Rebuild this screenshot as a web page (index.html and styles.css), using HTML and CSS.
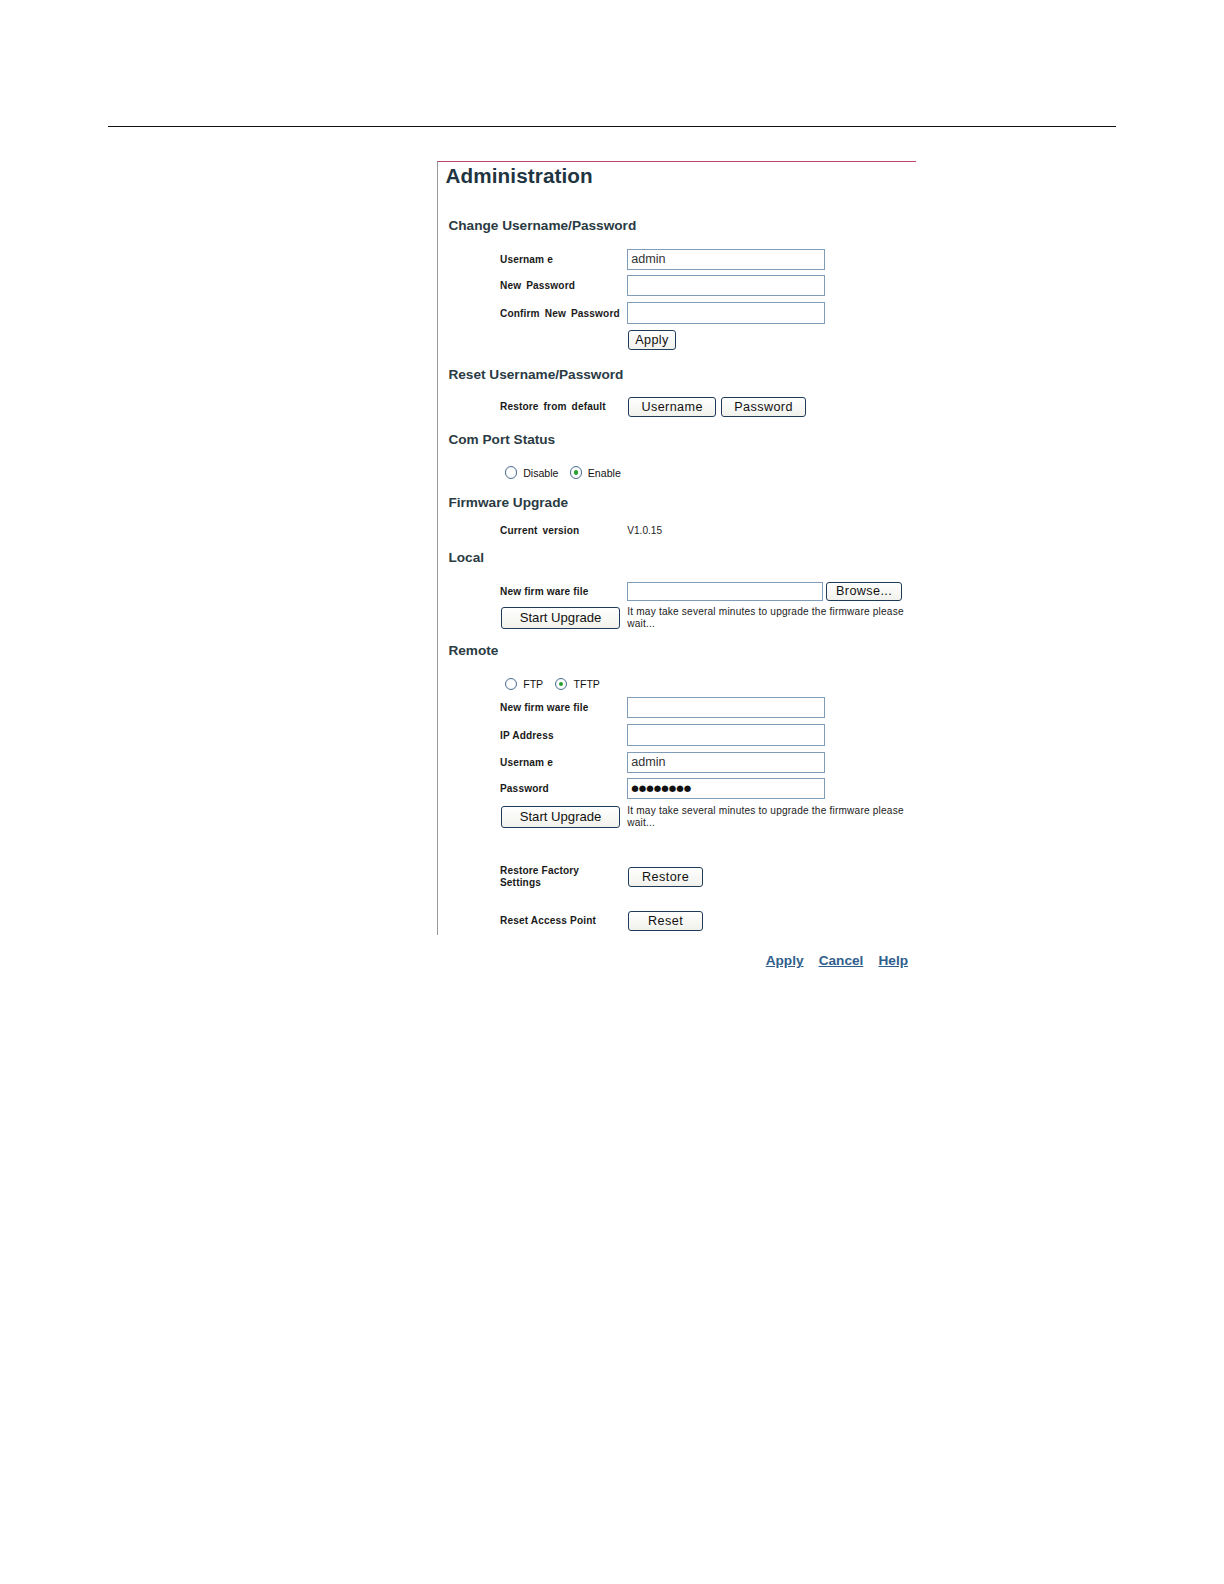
FILE: index.html
```html
<!DOCTYPE html>
<html>
<head>
<meta charset="utf-8">
<title>Administration</title>
<link rel="stylesheet" href="styles.css">
</head>
<body>
<div class="page">
  <div class="rule"></div>
  <div class="panel">
    <h1 class="title">Administration</h1>

    <h2 class="sec sec-first">Change Username/Password</h2>
    <div class="row r-first"><span class="lbl tight">Usernam e</span><span class="field">admin</span></div>
    <div class="row r-gap6"><span class="lbl">New Password</span><span class="field"></span></div>
    <div class="row r-gap7"><span class="lbl">Confirm New Password</span><span class="field"></span></div>
    <div class="row r-gap7"><span class="lbl"></span><span class="btn btn-apply">Apply</span></div>

    <h2 class="sec s16">Reset Username/Password</h2>
    <div class="row r-14"><span class="lbl">Restore from default</span><span class="btn btn-user">Username</span><span class="btn btn-pass">Password</span></div>

    <h2 class="sec s15">Com Port Status</h2>
    <div class="radios r-16">
      <span class="radio"></span><span class="rtext">Disable</span>
      <span class="radio on"></span><span class="rtext">Enable</span>
    </div>

    <h2 class="sec s14">Firmware Upgrade</h2>
    <div class="row r-11 short"><span class="lbl">Current version</span><span class="val">V1.0.15</span></div>

    <h2 class="sec s12">Local</h2>
    <div class="row r-15 mid"><span class="lbl tight">New firm ware file</span><span class="field f-short"></span><span class="btn btn-browse">Browse...</span></div>
    <div class="row r-gap6 up"><span class="btn btn-start">Start Upgrade</span><span class="note">It may take several minutes to upgrade the firmware please wait...</span></div>

    <h2 class="sec s14">Remote</h2>
    <div class="radios r-16 remote">
      <span class="radio"></span><span class="rtext">FTP</span>
      <span class="radio on"></span><span class="rtext">TFTP</span>
    </div>
    <div class="row r-gap6"><span class="lbl tight">New firm ware file</span><span class="field"></span></div>
    <div class="row r-gap7"><span class="lbl tight">IP Address</span><span class="field"></span></div>
    <div class="row r-gap7"><span class="lbl tight">Usernam e</span><span class="field">admin</span></div>
    <div class="row r-gap6"><span class="lbl">Password</span><span class="field dots">&#9679;&#9679;&#9679;&#9679;&#9679;&#9679;&#9679;&#9679;</span></div>
    <div class="row r-gap7 up"><span class="btn btn-start">Start Upgrade</span><span class="note">It may take several minutes to upgrade the firmware please wait...</span></div>

    <div class="row r-38 tall2"><span class="lbl lbl-wrap">Restore Factory Settings</span><span class="btn btn-restore">Restore</span></div>
    <div class="row r-23"><span class="lbl tight">Reset Access Point</span><span class="btn btn-restore">Reset</span></div>
  </div>
  <div class="links">
    <a href="#" class="lnk">Apply</a>
    <a href="#" class="lnk">Cancel</a>
    <a href="#" class="lnk">Help</a>
  </div>
</div>
</body>
</html>
```

FILE: styles.css
```css
html, body {
  margin: 0;
  padding: 0;
  background: #ffffff;
}
html {
  zoom: 1.0101;
}
body {
  font-family: "Liberation Sans", Arial, sans-serif;
  color: #000;
}
.page {
  padding-top: 125px;
}
.rule {
  margin-left: 107px;
  width: 998px;
  height: 1px;
  background: #111;
}
.panel {
  margin-top: 33px;
  margin-left: 433px;
  width: 473px;
  border-top: 1px solid #b8456c;
  border-left: 1px solid #9a9a9a;
  padding-bottom: 4px;
}
.title {
  margin: 2px 0 0 7px;
  font-size: 20.5px;
  line-height: 24px;
  font-weight: bold;
  color: #1f3541;
  letter-spacing: 0.1px;
}
.sec {
  margin: 0 0 0 10px;
  font-size: 13.5px;
  line-height: 16px;
  font-weight: bold;
  color: #2b3b44;
}
.sec-first { margin-top: 30px; }
.s16 { margin-top: 16px; }
.s15 { margin-top: 15px; }
.s14 { margin-top: 14px; }
.s12 { margin-top: 12px; }

.row {
  display: flex;
  align-items: center;
  height: 20px;
  padding-left: 61px;
}
.r-first { margin-top: 15px; }
.r-gap6 { margin-top: 6px; }
.r-gap7 { margin-top: 7px; }
.r-14 { margin-top: 14px; }
.r-11 { margin-top: 11px; }
.r-15 { margin-top: 15px; }
.r-16 { margin-top: 16px; }
.r-38 { margin-top: 38px; }
.r-23 { margin-top: 23px; }
.short { height: 16px; }
.mid { height: 19px; }
.tall2 { height: 21px; }
.up { align-items: flex-start; height: 22px; }

.lbl {
  width: 126px;
  flex: none;
  font-size: 10px;
  font-weight: bold;
  word-spacing: 2px;
  letter-spacing: 0.15px;
  color: #1a1a1a;
}
.lbl.tight {
  word-spacing: 0;
}
.lbl-wrap {
  width: 90px;
  margin-right: 36px;
  line-height: 12px;
  word-spacing: 0;
}
.field {
  box-sizing: border-box;
  width: 196px;
  height: 21px;
  border: 1px solid #7f9db9;
  background: #fff;
  font-size: 12.5px;
  line-height: 19px;
  padding-left: 3px;
  color: #333;
}
.f-short {
  width: 194px;
  height: 19px;
  line-height: 17px;
}
.dots {
  font-size: 8.5px;
  letter-spacing: 0;
  color: #111;
  font-family: "DejaVu Sans", sans-serif;
}
.val {
  font-size: 10px;
  color: #222;
}
.btn {
  box-sizing: border-box;
  display: inline-flex;
  align-items: center;
  justify-content: center;
  height: 20px;
  border: 1px solid #1f3b5a;
  border-radius: 3px;
  background: linear-gradient(#ffffff, #f1f1ec);
  font-size: 12.5px;
  color: #111;
  letter-spacing: 0.4px;
}
.btn-apply { margin-left: 1px; width: 47px; }
.btn-user { margin-left: 1px; width: 87px; }
.btn-pass { margin-left: 5px; width: 84px; }
.btn-browse { margin-left: 3px; width: 75px; height: 19px; }
.btn-start {
  margin-left: 1px;
  width: 118px;
  height: 22px;
  font-size: 13px;
  letter-spacing: 0;
  margin-right: 7px;
}
.btn-restore { margin-left: 1px; width: 74px; }
.note {
  width: 285px;
  font-size: 10px;
  line-height: 12px;
  letter-spacing: 0.2px;
  color: #222;
  margin-top: -1px;
}
.radios {
  display: flex;
  align-items: center;
  height: 16px;
  padding-left: 66px;
}
.radio {
  box-sizing: border-box;
  width: 12px;
  height: 12px;
  border: 1px solid #4f6f93;
  border-radius: 50%;
  background: radial-gradient(circle, #ffffff 40%, #e8edf2 100%);
  position: relative;
  flex: none;
}
.radio.on::after {
  content: "";
  position: absolute;
  left: 3px;
  top: 3px;
  width: 4px;
  height: 4px;
  border-radius: 50%;
  background: #27a02d;
}
.rtext {
  font-size: 10.5px;
  color: #111;
  margin-left: 6px;
  margin-right: 11px;
}
.remote .rtext { margin-right: 12px; }
.links {
  margin-top: 18px;
  margin-left: 758px;
  display: flex;
  gap: 15px;
}
.lnk {
  font-size: 13.5px;
  line-height: 16px;
  font-weight: bold;
  color: #2f5e8c;
  text-decoration: underline;
}
```
